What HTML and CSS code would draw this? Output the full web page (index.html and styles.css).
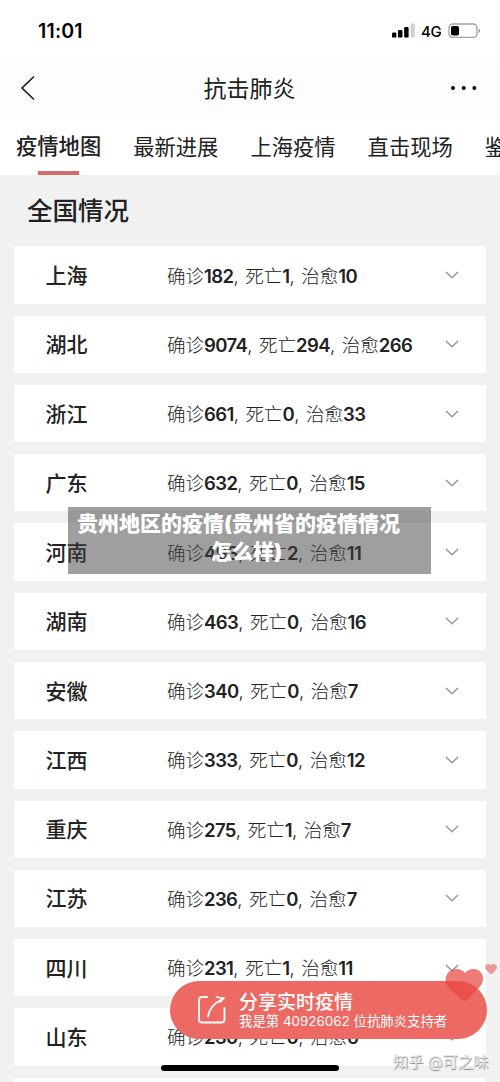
FILE: index.html
```html
<!DOCTYPE html>
<html lang="zh-CN">
<head>
<meta charset="utf-8">
<title>抗击肺炎</title>
<link rel="stylesheet" href="styles.css">
</head>
<body>
<svg class="defs" width="0" height="0"><symbol id="down" viewBox="0 0 14 8"><path d="M1 1l6 5.700L13 1" fill="none" stroke="currentColor" stroke-width="1.500"/></symbol></svg>
<div class="screen">
  <header class="status">
    <span class="time">11:01</span>
    <div class="signals">
      <svg width="24" height="16" viewBox="0 0 24 16"><rect x="0" y="9.600" width="4.400" height="5" rx="1.200"/><rect x="6" y="7" width="4.400" height="7.600" rx="1.200"/><rect x="12.200" y="4" width="4.400" height="10.600" rx="1.200"/><rect x="18.600" y="0.500" width="4.200" height="14.100" rx="1.200" fill="#d0d0d0"/></svg>
      <span class="network">4G</span>
      <svg width="34" height="16" viewBox="0 0 34 16"><rect x="1" y="1" width="28" height="13.400" rx="3.800" fill="none" stroke="#a0a0a0" stroke-width="1.300"/><rect x="3" y="3" width="8" height="9.500" rx="1.800"/><path d="M30.600 5.500c2 .8 2 3.800 0 4.600z" fill="#999"/></svg>
    </div>
  </header>
  <nav class="navbar">
    <svg class="back" width="16" height="26" viewBox="0 0 16 26"><path d="M14 1.500L2 13l12 11.500" fill="none" stroke="#222" stroke-width="1.700"/></svg>
    <h1 class="title">抗击肺炎</h1>
    <svg class="more" width="28" height="6" viewBox="0 0 28 6"><circle cx="3" cy="3" r="2"/><circle cx="13.700" cy="3" r="2"/><circle cx="24.400" cy="3" r="2"/></svg>
  </nav>
  <div class="tabs"><span class="tab active">疫情地图</span><span class="tab">最新进展</span><span class="tab">上海疫情</span><span class="tab">直击现场</span><span class="tab">鉴别</span></div>
  <main class="content">
    <h2 class="heading">全国情况</h2>
    <div class="list">
      <div class="row"><span class="place">上海</span><span class="detail">确诊<b>182</b>, 死亡<b>1</b>, 治愈<b>10</b></span><svg class="chevron"><use href="#down"/></svg></div>
      <div class="row"><span class="place">湖北</span><span class="detail">确诊<b>9074</b>, 死亡<b>294</b>, 治愈<b>266</b></span><svg class="chevron"><use href="#down"/></svg></div>
      <div class="row"><span class="place">浙江</span><span class="detail">确诊<b>661</b>, 死亡<b>0</b>, 治愈<b>33</b></span><svg class="chevron"><use href="#down"/></svg></div>
      <div class="row"><span class="place">广东</span><span class="detail">确诊<b>632</b>, 死亡<b>0</b>, 治愈<b>15</b></span><svg class="chevron"><use href="#down"/></svg></div>
      <div class="row"><span class="place">河南</span><span class="detail">确诊<b>493</b>, 死亡<b>2</b>, 治愈<b>11</b></span><svg class="chevron"><use href="#down"/></svg></div>
      <div class="row"><span class="place">湖南</span><span class="detail">确诊<b>463</b>, 死亡<b>0</b>, 治愈<b>16</b></span><svg class="chevron"><use href="#down"/></svg></div>
      <div class="row"><span class="place">安徽</span><span class="detail">确诊<b>340</b>, 死亡<b>0</b>, 治愈<b>7</b></span><svg class="chevron"><use href="#down"/></svg></div>
      <div class="row"><span class="place">江西</span><span class="detail">确诊<b>333</b>, 死亡<b>0</b>, 治愈<b>12</b></span><svg class="chevron"><use href="#down"/></svg></div>
      <div class="row"><span class="place">重庆</span><span class="detail">确诊<b>275</b>, 死亡<b>1</b>, 治愈<b>7</b></span><svg class="chevron"><use href="#down"/></svg></div>
      <div class="row"><span class="place">江苏</span><span class="detail">确诊<b>236</b>, 死亡<b>0</b>, 治愈<b>7</b></span><svg class="chevron"><use href="#down"/></svg></div>
      <div class="row"><span class="place">四川</span><span class="detail">确诊<b>231</b>, 死亡<b>1</b>, 治愈<b>11</b></span><svg class="chevron"><use href="#down"/></svg></div>
      <div class="row"><span class="place">山东</span><span class="detail">确诊<b>230</b>, 死亡<b>0</b>, 治愈<b>6</b></span><svg class="chevron"><use href="#down"/></svg></div>
      <div class="row"></div>
    </div>
  </main>
  <div class="caption"><span class="caption-first">贵州地区的疫情(贵州省的疫情情况</span><span>怎么样)</span></div>
  <div class="share">
    <svg class="share-icon" width="30" height="30" viewBox="0 0 30 30"><path d="M10 2H5Q2 2 2 5v19.500q0 3 3 3h19.500q3 0 3-3V13M11 21.500C12 14 17 8 26 4M19.500 2q3 .8 7.500 1.200-2 2-4 3.800" fill="none" stroke="#fff" stroke-width="1.800" stroke-linecap="round" stroke-linejoin="round"/></svg>
    <div class="share-text"><strong>分享实时疫情</strong><span>我是第 40926062 位抗肺炎支持者</span></div>
  </div>
  <svg class="hearts" width="60" height="44" viewBox="0 0 60 44"><path d="M22 38L9 26C2 18 7 7 16 7c4 0 7 1.500 9 4 2-2.500 5-4 8.500-4 9 0 13 11 6 18L27 38q-2.500 2-5 0z" fill="#e94843" fill-opacity=".72"/><path d="M49.500 11.500l-4-4.500c-2-4 3.500-7 5.500-3.500 2-3.500 7.500-.5 5.500 3.500l-4 4.500q-1.500 1.200-3 0z" fill="#e97878" fill-opacity=".72"/></svg>
  <div class="watermark">知乎 @可之味</div>
  <div class="home"></div>
</div>
</body>
</html>
```
FILE: styles.css
```css
* { box-sizing: border-box; }
body { margin: 0; font-family: Inter, "Noto Sans CJK SC", sans-serif; color: #222; }
.defs { position: absolute; }
.screen { position: relative; width: 500px; height: 1082px; overflow: hidden; background: #f1f1f1; }
.status { display: flex; justify-content: space-between; align-items: center; height: 59px; padding: 3px 18px 0 38px; background: #fff; color: #000; }
.time { font-size: 19.5px; font-weight: 600; letter-spacing: .2px; }
.signals { display: flex; align-items: center; }
.network { width: 32px; padding-left: 5px; font-size: 15px; font-weight: 500; letter-spacing: -.3px; }
.navbar { display: flex; align-items: center; justify-content: space-between; height: 58px; padding: 0 22px 0 20px; background: #fdfdfd; border-bottom: 1px solid #fafafa; }
.title { margin: 0; padding: 2px 0 0 13px; font-size: 23px; font-weight: 400; line-height: 56px; }
.tabs { display: flex; gap: 32px; height: 58px; padding-left: 16px; background: #fff; font-size: 21.3px; line-height: 61px; white-space: nowrap; }
.tab { flex: none; height: 58px; }
.tab.active { position: relative; font-weight: 500; line-height: 58px; }
.tab.active::after { content: ""; position: absolute; left: 22px; bottom: 0; width: 41px; height: 4px; background: #d66a6a; }
.content { height: 920px; }
.heading { margin: 0; height: 71.4px; padding-left: 27px; font-size: 25.5px; font-weight: 500; line-height: 71px; }
.list { display: grid; grid-auto-rows: 57.3px; gap: 11.97px; padding: 0 14px; }
.row { display: flex; align-items: center; padding: 0 27px 0 31.500px; background: #fff; box-shadow: 0 0 1px #e6e6e6; }
.place { width: 121.5px; padding-bottom: 2px; font-size: 21px; font-weight: 500; }
.detail { flex: 1; padding-bottom: 1px; font-size: 18.5px; font-weight: 300; word-spacing: 1.4px; white-space: nowrap; }
.detail b { font-weight: 600; letter-spacing: -.6px; }
.chevron { width: 14px; height: 8px; color: #999; }
.caption { position: absolute; left: 68px; top: 507px; width: 363px; height: 67px; padding: 3px 6px 0 0; display: flex; flex-direction: column; align-items: center; background: rgba(64, 64, 64, .5); color: #fff; font-size: 21px; font-weight: 900; line-height: 28px; white-space: nowrap; }
.caption-first { margin-right: 16px; }
.share { position: absolute; left: 170px; top: 981px; width: 317px; height: 58px; padding-left: 27px; display: flex; align-items: center; gap: 12px; border-radius: 29px; background: #ec6964; color: #fff; }
.share-text { display: flex; flex-direction: column; padding-top: 1px; white-space: nowrap; }
.share-text strong { font-size: 19px; font-weight: 500; line-height: 21px; }
.share-text span { font-size: 13.4px; line-height: 17px; }
.hearts { position: absolute; left: 440px; top: 962px; }
.watermark { position: absolute; left: 393px; top: 1051px; color: #e4e4e4; font-size: 15.3px; line-height: 22px; text-shadow: .7px .7px 1px #888; white-space: nowrap; }
.home { position: absolute; left: 161px; top: 1065px; width: 178px; height: 6px; border-radius: 3px; background: #000; }
```
